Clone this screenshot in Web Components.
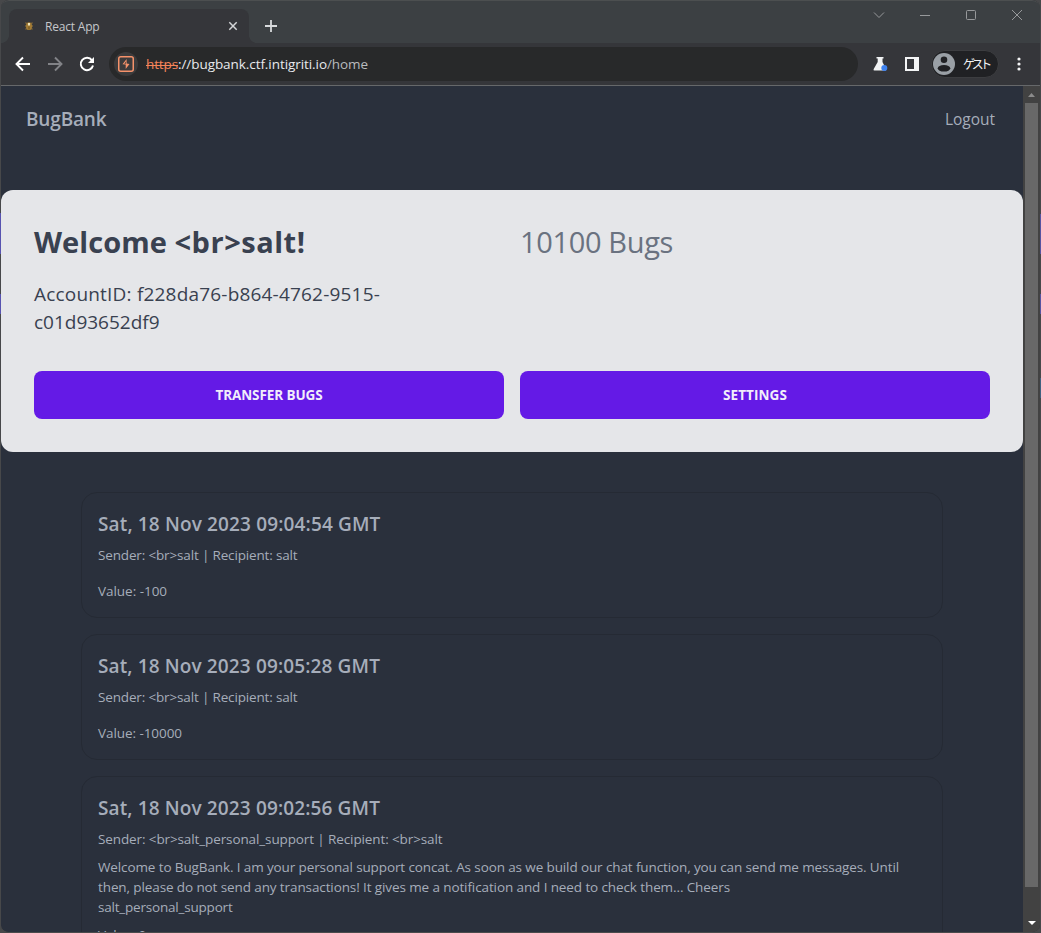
<!DOCTYPE html>
<html lang="en">
<head>
<meta charset="utf-8">
<title>React App</title>
<style>
html,body{margin:0;height:100%;overflow:hidden;background:#39393b}
body{font-family:"Open Sans","Noto Sans","Noto Sans CJK JP",sans-serif}
</style>
</head>
<body>
<browser-window></browser-window>
<script>
const define = (name, html, after) => customElements.define(name, class extends HTMLElement {
  constructor() {
    super();
    const t = document.createElement('template');
    t.innerHTML = html;
    this.attachShadow({mode: 'open'}).append(t.content.cloneNode(true));
  }
  connectedCallback() { if (after) after.call(this); }
});

/* One line of text whose tracking is adjusted to reach the given measure. */
define('text-run', `<style>:host{display:block;white-space:pre;width:max-content}span{display:inline-block}</style><span><slot></slot></span>`, function () {
  const w = +this.getAttribute('w'), s = this.shadowRoot.querySelector('span');
  const n = this.textContent.length;
  if (w) s.style.letterSpacing = ((w - s.getBoundingClientRect().width) / n).toFixed(3) + 'px';
});

define('tab-strip', `<style>
:host{display:flex;height:43px;background:#3c4043;box-sizing:border-box;align-items:flex-start;border-top:1px solid #4c4f50;border-radius:8px 8px 0 0}
.tab{width:240px;height:34px;margin:8px 0 0 8px;background:#35363a;border-radius:8px 8px 0 0;display:flex;align-items:center;position:relative;color:#c5c7ca;font-size:12px}
.tab:before,.tab:after{content:"";position:absolute;bottom:0;width:8px;height:8px}
.tab:before{left:-8px;background:radial-gradient(circle at 0 0,transparent 7.6px,#35363a 8.2px)}
.tab:after{right:-8px;background:radial-gradient(circle at 100% 0,transparent 7.6px,#35363a 8.2px)}
.bug{margin-left:15px}text-run{margin-left:11px}.close{margin-left:auto;margin-right:11px}
.plus{margin:19px 0 0 16px}
.ctl{display:flex;margin-left:auto;margin-top:8px;padding-right:17px;gap:34px}
svg{display:block}
</style>
<div class="tab">
<svg class="bug" width="10" height="12" viewBox="0 0 10 12"><path d="M1.500 2.500l1.500 1.500M8.500 2.500L7 4M1 6h8M1.500 9.500L3 8M8.500 9.500L7 8" stroke="#77613a" stroke-width="1.400"/><ellipse cx="5" cy="6.200" rx="3" ry="3.900" fill="#a27b35"/><path d="M4 3h2v2.500H4z" fill="#f0e4b8"/><path d="M4.500 6.500h1v3h-1z" fill="#6d531f"/></svg>
<text-run w="54.500">React App</text-run>
<svg class="close" width="10" height="10" viewBox="0 0 10 10"><path d="M1.300 1.300l7.400 7.400M8.700 1.300L1.300 8.700" stroke="#d3d5d7" stroke-width="1.500"/></svg></div>
<svg class="plus" width="12" height="12" viewBox="0 0 12 12"><path d="M6 0v12M0 6h12" stroke="#d8dadc" stroke-width="1.800"/></svg>
<div class="ctl">
<svg width="12" height="12" viewBox="0 0 12 12"><path d="M1 3.500l5 5 5-5" fill="none" stroke="#97999b"/></svg>
<svg width="12" height="12" viewBox="0 0 12 12"><path d="M1 6.500h10" stroke="#97999b"/></svg>
<svg width="12" height="12" viewBox="0 0 12 12"><rect x="1.500" y="1.500" width="9" height="9" rx="1" fill="none" stroke="#97999b"/></svg>
<svg width="12" height="12" viewBox="0 0 12 12"><path d="M1 1l10 10M11 1L1 11" stroke="#97999b"/></svg>
</div>`);

define('nav-buttons', `<style>:host{display:flex;gap:16px;margin-left:14px}svg{display:block}</style>
<svg width="16" height="16" viewBox="0 0 16 16"><path d="M15 8H2M8 1.500L1.500 8 8 14.500" fill="none" stroke="#fff" stroke-width="1.900"/></svg>
<svg width="16" height="16" viewBox="0 0 16 16"><path d="M1 8h13M8 1.500L14.500 8 8 14.500" fill="none" stroke="#828387" stroke-width="1.900"/></svg>
<svg width="16" height="16" viewBox="0 0 16 16"><path d="M13 4.300A6.200 6.200 0 1 0 14 9.500" fill="none" stroke="#fff" stroke-width="2"/><path d="M15 1v6H9z" fill="#fff"/></svg>`);

define('address-bar', `<style>
:host{display:flex;align-items:center;height:34px;width:749px;border-radius:17px;background:#28292a;margin-left:14px;font-size:13.500px;color:#e8eaed}
.chip{width:24px;height:24px;border-radius:12px;background:#3b3b3c;margin:0 8px 0 5px;display:flex;align-items:center;justify-content:center}
.bad{color:#f5845a;position:relative}.bad:after{content:"";position:absolute;left:0;right:0;top:10px;height:1px;background:#f5845a}
.path{color:#b9bbbe}
</style>
<div class="chip"><svg width="16" height="16" viewBox="0 0 16 16"><rect x=".75" y=".75" width="14.500" height="14.500" rx="2" fill="none" stroke="#f5926a" stroke-width="1.500"/><path d="M8.600 3L4.500 8.200l3.200.3V13L11.500 7.900 8.600 7.600z" fill="#f5926a"/><path d="M8 5.500L6.300 7.700h1.500z" fill="#3b3b3c"/></svg></div>
<text-run class="bad" w="32">https</text-run><text-run w="149">://bugbank.ctf.intigriti.io</text-run><text-run class="path" w="41">/home</text-run>`);

define('profile-pill', `<style>
:host{display:flex;align-items:center;width:64px;height:26px;border-radius:14px;background:#202124;border:1px solid #3c3d40;font-family:"Noto Sans CJK JP",sans-serif;font-size:12px;color:#f3f4f5;margin-left:12px;padding-right:2px}
svg{margin:0 8px 0 1px}text-run{line-height:24px}
</style><svg width="22" height="22" viewBox="0 0 22 22"><circle cx="11" cy="11" r="11" fill="#9aa0a6"/><circle cx="11" cy="6.800" r="3.300" fill="#202124"/><ellipse cx="11" cy="15.300" rx="6.300" ry="3.300" fill="#202124"/></svg><text-run w="26">ゲスト</text-run>`);

define('tool-bar', `<style>
:host{display:flex;align-items:center;height:42px;background:#35363a;border-bottom:1px solid #66686a}
.flask{margin-left:15px}.panel{margin-left:17px}.dots{margin-left:18px}svg{flex:none}
</style><nav-buttons></nav-buttons><address-bar></address-bar>
<svg class="flask" width="15" height="16" viewBox="0 0 15 16"><path d="M3.500 1h7v1.500H9.500V6L13 13q.5 1.500-1 1.500H1.500Q0 14.500.7 13L4.700 6V2.500H3.500z" fill="#f1f3f4"/><circle cx="11.300" cy="12" r="3" fill="#3f83f0"/></svg>
<svg class="panel" width="14" height="14" viewBox="0 0 14 14"><path fill-rule="evenodd" d="M0 0h14v14H0zM2 2v10h7V2z" fill="#f3f4f5"/></svg>
<profile-pill></profile-pill>
<svg class="dots" width="4" height="14" viewBox="0 0 4 14"><g fill="#f3f4f5"><circle cx="2" cy="2" r="1.600"/><circle cx="2" cy="7" r="1.600"/><circle cx="2" cy="12" r="1.600"/></g></svg>`);

define('bank-nav', `<style>
:host{display:flex;justify-content:space-between;align-items:center;height:62px;padding:2px 28px 0 25px;margin-bottom:40px}
.brand{font-size:19px;font-weight:600}.out{font-size:15.500px}
</style><text-run class="brand" w="80.500">BugBank</text-run><text-run class="out" w="50">Logout</text-run>`);

define('bank-button', `<style>
:host{display:flex;align-items:center;justify-content:center;height:48px;border-radius:8px;background:#641ae6;color:#f1edfb;font-weight:700;font-size:13.500px}
</style><slot></slot>`);

define('account-hero', `<style>
:host{display:block;box-sizing:border-box;height:262px;border-radius:12px;background:#e5e6e9;color:#394150;padding:32px 33px}
.grid{display:grid;grid-template-columns:470px 470px;column-gap:16px}
.name{display:flex;font-size:29px;font-weight:700;line-height:40px}
.bal{font-size:29px;color:#6a7280;line-height:40px}
.id{grid-column:1/-1;margin:18px 0 35px;font-size:19px;line-height:28px}
</style><div class="grid">
<div class="name"><text-run w="140.500">Welcome </text-run><text-run w="131">&lt;br&gt;salt!</text-run></div><text-run class="bal" w="153">10100 Bugs</text-run>
<div class="id"><text-run w="346">AccountID: f228da76-b864-4762-9515-</text-run><text-run w="125.500">c01d93652df9</text-run></div>
<bank-button><text-run w="107">TRANSFER BUGS</text-run></bank-button><bank-button><text-run w="64">SETTINGS</text-run></bank-button>
</div>`);

define('transaction-card', `<style>
:host{display:block;box-sizing:border-box;min-height:126px;border:1px solid #252a34;border-radius:16px;padding:16px;font-size:13.500px;line-height:20px}
.h{font-size:19px;font-weight:600;line-height:28px;margin:1px 0 7px;display:block}
.v{display:block;margin-top:16px}.m{display:block;margin-top:8px}
.m+.v{margin-top:8px}
</style><slot name="date" class="h"></slot><slot name="who"></slot><slot name="msg" class="m"></slot><slot name="value" class="v"></slot>`, function () {
  if (!this.querySelector('[slot=msg]')) this.shadowRoot.querySelector('.m').remove();
});

define('bank-page', `<style>
:host{display:block;width:1022px;height:846px;overflow:hidden;background:#2a303c;color:#a6adba}
.list{display:grid;gap:16px;padding:40px 80px 0}
</style><bank-nav></bank-nav><account-hero></account-hero>
<div class="list">
<transaction-card><text-run slot="date" w="282.500">Sat, 18 Nov 2023 09:04:54 GMT</text-run><text-run slot="who" w="199.500">Sender: &lt;br&gt;salt | Recipient: salt</text-run><text-run slot="value" w="69">Value: -100</text-run></transaction-card>
<transaction-card><text-run slot="date" w="282">Sat, 18 Nov 2023 09:05:28 GMT</text-run><text-run slot="who" w="199.500">Sender: &lt;br&gt;salt | Recipient: salt</text-run><text-run slot="value" w="84">Value: -10000</text-run></transaction-card>
<transaction-card><text-run slot="date" w="282">Sat, 18 Nov 2023 09:02:56 GMT</text-run><text-run slot="who" w="344.500">Sender: &lt;br&gt;salt_personal_support | Recipient: &lt;br&gt;salt</text-run><text-run slot="msg" w="801">Welcome to BugBank. I am your personal support concat. As soon as we build our chat function, you can send me messages. Until</text-run><text-run slot="msg" w="632">then, please do not send any transactions! It gives me a notification and I need to check them... Cheers</text-run><text-run slot="msg" w="134.500">salt_personal_support</text-run><text-run slot="value" w="48">Value: 0</text-run></transaction-card>
</div>`);

define('scroll-bar', `<style>
:host{display:flex;flex-direction:column;align-items:center;width:17px;height:846px;background:#424242}
.up{margin:7px 0 6px}.thumb{width:13px;height:784px;background:#686868}.down{margin-top:34px}svg{display:block}
</style><svg class="up" width="7" height="4" viewBox="0 0 7 4"><path d="M0 4L3.500 0 7 4z" fill="#8b8b8b"/></svg><div class="thumb"></div><svg class="down" width="8" height="4" viewBox="0 0 8 4"><path d="M0 0h8L4 4z" fill="#fff"/></svg>`);

define('browser-window', `<style>
:host{display:block;box-sizing:border-box;width:1041px;height:933px;padding:0 1px;background:linear-gradient(#5753b0,#5753b0) 0 213px/1px 41px no-repeat,linear-gradient(#5753b0,#5753b0) 0 294px/1px 20px no-repeat,linear-gradient(#5753a0,#5753a0) 1040px 214px/1px 40px no-repeat,linear-gradient(#5753a0,#5753a0) 1040px 294px/1px 20px no-repeat,linear-gradient(#40617f,#40617f) 1040px 378px/1px 20px no-repeat,#47484a}
.view{display:flex;border-radius:0 0 7px 7px;overflow:hidden}
.frame{border-bottom:1px solid #4a4b4c;border-radius:8px;overflow:hidden;background:#35363a}
</style><div class="frame"><tab-strip></tab-strip><tool-bar></tool-bar><div class="view"><bank-page></bank-page><scroll-bar></scroll-bar></div></div>`);
</script>
</body>
</html>
